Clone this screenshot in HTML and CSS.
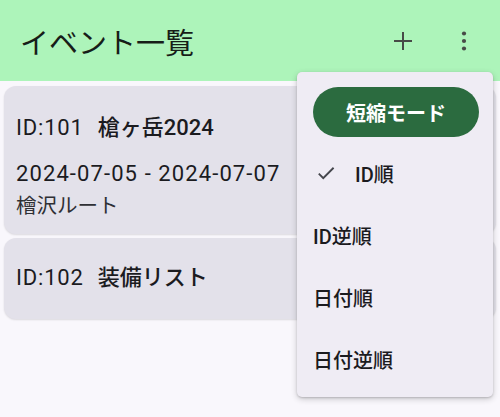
FILE: index.html
```html
<!DOCTYPE html>
<html lang="ja">
<head>
<meta charset="utf-8">
<link rel="stylesheet" href="styles.css">
</head>
<body>
<header class="appbar">
  <h1 class="title">イベント一覧</h1>
  <div class="actions">
    <span class="icon-btn">
      <svg width="24" height="24" viewBox="0 0 24 24"><path d="M12 3v18M3 12h18" stroke="#474a47" stroke-width="2" fill="none"/></svg>
    </span>
    <span class="icon-btn">
      <svg width="24" height="24" viewBox="0 0 24 24"><circle cx="12" cy="4.5" r="2.1" fill="#474a47"/><circle cx="12" cy="12" r="2.1" fill="#474a47"/><circle cx="12" cy="19.5" r="2.1" fill="#474a47"/></svg>
    </span>
  </div>
</header>
<main class="list">
  <div class="card card-tall">
    <div class="card-title"><span class="id">ID:101</span><span class="name">槍ヶ岳2024</span></div>
    <div class="dates">2024-07-05 - 2024-07-07</div>
    <div class="route">檜沢ルート</div>
  </div>
  <div class="card card-short">
    <div class="card-title"><span class="id">ID:102</span><span class="name">装備リスト</span></div>
  </div>
</main>
<div class="menu">
  <div class="menu-btn-row"><span class="pill">短縮モード</span></div>
  <div class="menu-item checked">
    <svg class="check" width="22" height="22" viewBox="0 0 24 24"><path d="M9 16.17L4.83 12l-1.42 1.41L9 19 21 7l-1.41-1.41z" fill="#45464c"/></svg>
    <span>ID順</span>
  </div>
  <div class="menu-item"><span>ID逆順</span></div>
  <div class="menu-item"><span>日付順</span></div>
  <div class="menu-item"><span>日付逆順</span></div>
</div>
</body>
</html>
```

FILE: styles.css
```css
html, body {
  margin: 0;
  padding: 0;
}
body {
  width: 500px;
  height: 417px;
  overflow: hidden;
  background: #f9f7fc;
  font-family: Roboto, "Noto Sans CJK JP", sans-serif;
  color: #1b1b1f;
  position: relative;
}
.appbar {
  height: 81px;
  background: #adf4ba;
  display: flex;
  align-items: center;
  justify-content: space-between;
  padding: 0 24px 0 20px;
  box-sizing: border-box;
}
.title {
  margin: 0;
  font-weight: 400;
  font-size: 29px;
  color: #171d18;
  letter-spacing: 0;
}
.actions {
  display: flex;
  align-items: center;
  gap: 37px;
}
.icon-btn {
  display: flex;
  width: 24px;
  height: 24px;
}
.list {
  display: flex;
  flex-direction: column;
  gap: 4px;
  padding: 5px 4px;
}
.card {
  background: #e3e1ea;
  border-radius: 12px;
  box-shadow: 0 1px 2px rgba(0,0,0,0.12);
  padding: 0 12px;
  box-sizing: border-box;
}
.card-tall {
  height: 148px;
  padding-top: 27px;
}
.card-short {
  height: 81px;
  padding-top: 25px;
}
.card-title {
  font-size: 22px;
  line-height: 30px;
  display: flex;
  gap: 14px;
}
.id {
  letter-spacing: 0.8px;
}
.name {
  font-weight: 500;
}
.dates {
  margin-top: 17px;
  font-size: 22px;
  line-height: 28px;
  letter-spacing: 1.1px;
}
.route {
  margin-top: 4px;
  font-size: 20.5px;
  line-height: 28px;
  color: #2f3035;
}
.menu {
  position: absolute;
  left: 297px;
  top: 72px;
  width: 196px;
  height: 325px;
  background: #efecf4;
  border-radius: 5px;
  box-shadow: 0 2px 6px rgba(0,0,0,0.2), 0 1px 2px rgba(0,0,0,0.15);
  box-sizing: border-box;
  padding-top: 15px;
}
.menu-btn-row {
  padding-left: 16px;
  height: 50px;
}
.pill {
  display: flex;
  align-items: center;
  justify-content: center;
  width: 166px;
  height: 50px;
  border-radius: 25px;
  background: #2b6b3f;
  color: #ffffff;
  font-weight: 700;
  font-size: 20px;
}
.menu-item {
  height: 62px;
  display: flex;
  align-items: center;
  padding-left: 16px;
  font-size: 20px;
  font-weight: 500;
  color: #1b1b1f;
}
.menu-item:nth-child(2) {
  margin-top: 5px;
}
.check {
  margin-left: 2px;
  margin-right: 18px;
}
```
